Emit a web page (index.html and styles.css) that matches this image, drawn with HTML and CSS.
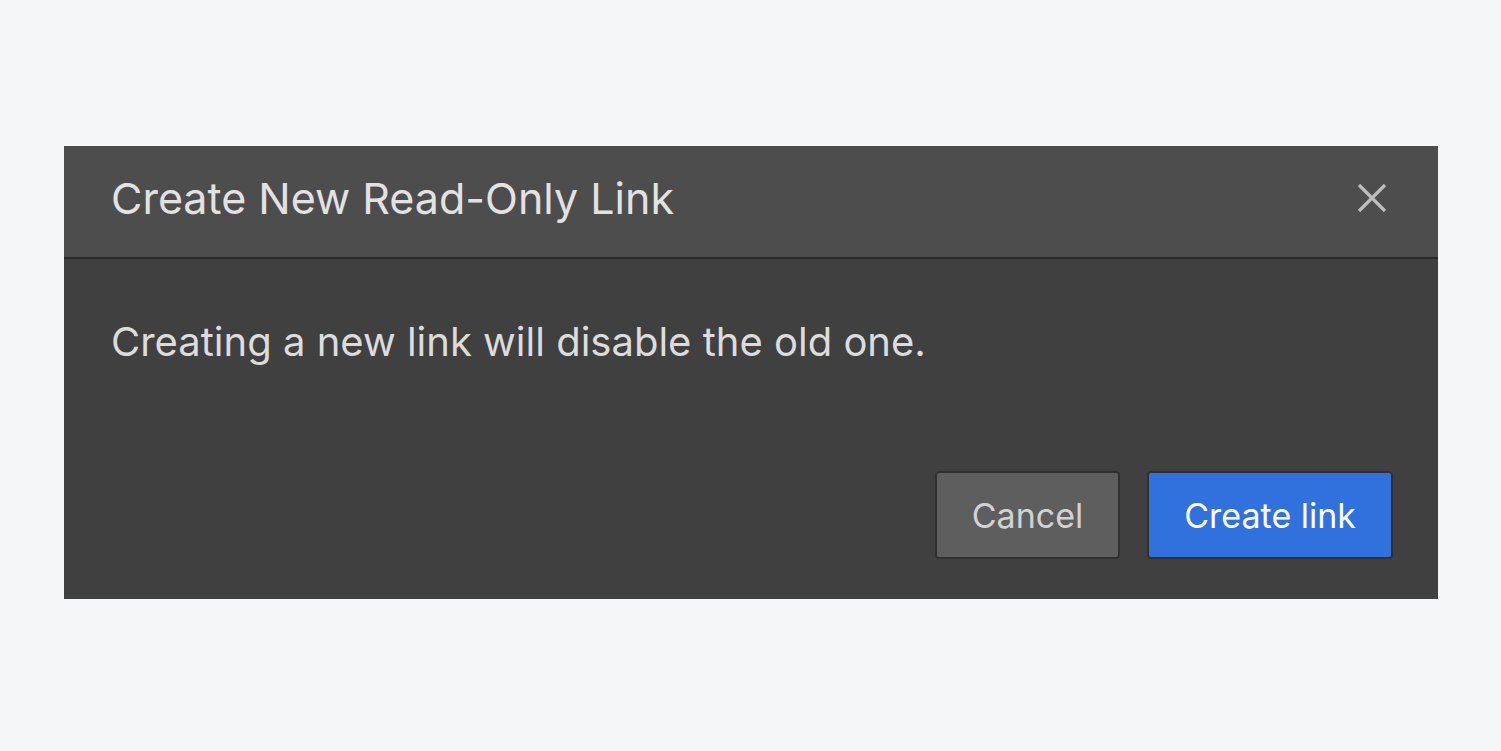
FILE: index.html
```html
<!DOCTYPE html>
<html>
<head>
  <meta charset="UTF-8">
  <title>Create New Read-Only Link</title>
  <link rel="stylesheet" href="styles.css">
</head>
<body>
  <div class="modal">
    <div class="modal-head">
      <h2>Create New Read-Only Link</h2>
      <button class="close" aria-label="Close">
        <svg width="30" height="30" viewBox="0 0 30 30"><path d="M2 2L28 28M28 2L2 28" stroke="#bdbdbd" stroke-width="3.2" fill="none"/></svg>
      </button>
    </div>
    <div class="modal-body">
      <p>Creating a new link will disable the old one.</p>
      <div class="actions">
        <button class="btn cancel">Cancel</button>
        <button class="btn primary">Create link</button>
      </div>
    </div>
  </div>
</body>
</html>
```

FILE: styles.css
```css
body {margin:0;background:#f5f6f8;font-family:Inter,"Noto Sans",sans-serif;padding:146px 63px 0 64px;}
.modal {background:#404040;}
.modal-head {display:flex;align-items:center;justify-content:space-between;height:113px;box-sizing:border-box;
  padding:0 51px 7px 47px;background:#4d4d4d;border-bottom:2px solid #2a2a2a;}
.modal-head h2 {margin:0;font-size:43px;font-weight:400;color:#e2e2e2;}
.close {background:none;border:0;padding:0;display:flex;cursor:pointer;}
.modal-body {padding:58px 45px 40px 47px;}
.modal-body p {margin:0;font-size:40px;color:#dcdcdc;}
.actions {display:flex;justify-content:flex-end;gap:27px;margin-top:105px;}
.btn {height:88px;border:2px solid #303030;border-radius:4px;font-family:inherit;font-size:34px;padding:0 35px;cursor:pointer;}
.cancel {background:#5e5e5e;color:#d2d2d2;}
.primary {background:#3071de;color:#fff;}
```
